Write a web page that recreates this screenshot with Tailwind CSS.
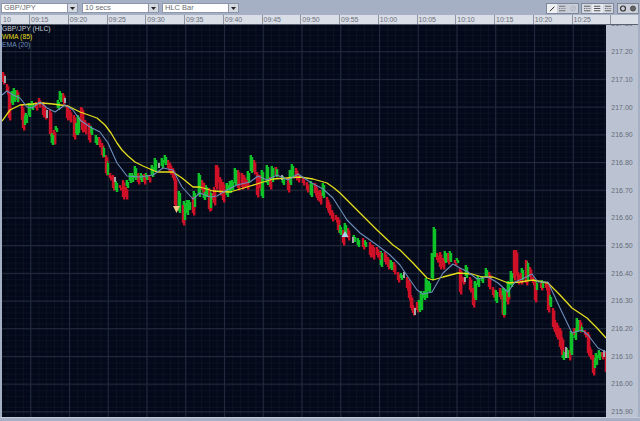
<!DOCTYPE html>
<html>
<head>
<meta charset="utf-8">
<script src="https://cdn.jsdelivr.net/npm/@tailwindcss/browser@4"></script>
</head>
<body class="m-0 overflow-hidden bg-[#a6b0c4]">
<div class="flex flex-col w-[640px] h-[421px] bg-[#a6b0c4] overflow-hidden font-['Liberation_Sans',Arial,sans-serif] text-[7px] leading-none">

  <!-- toolbar -->
  <div class="flex items-center h-[15px] pt-[1px] pl-[1px] pr-[1px] shrink-0">
    <div class="flex h-[10px] w-[77px] mr-[4px]">
      <div class="flex-1 bg-white border border-[#8d96a8] text-[#6a6d75] text-[7.5px] flex items-center pl-[2px]">GBP/JPY</div>
      <div class="w-[10px] bg-[#d5d9e2] border border-[#8d96a8] border-l-0 flex items-center justify-center"><svg width="5" height="3" viewBox="0 0 5 3"><path d="M0 0H5L2.5 3Z" fill="#222"/></svg></div>
    </div>
    <div class="flex h-[10px] w-[77px] mr-[3px]">
      <div class="flex-1 bg-white border border-[#8d96a8] text-[#6a6d75] text-[7.5px] flex items-center pl-[2px]">10 secs</div>
      <div class="w-[10px] bg-[#d5d9e2] border border-[#8d96a8] border-l-0 flex items-center justify-center"><svg width="5" height="3" viewBox="0 0 5 3"><path d="M0 0H5L2.5 3Z" fill="#222"/></svg></div>
    </div>
    <div class="flex h-[10px] w-[77px]">
      <div class="flex-1 bg-white border border-[#8d96a8] text-[#6a6d75] text-[7.5px] flex items-center pl-[2px]">HLC Bar</div>
      <div class="w-[10px] bg-[#d5d9e2] border border-[#8d96a8] border-l-0 flex items-center justify-center"><svg width="5" height="3" viewBox="0 0 5 3"><path d="M0 0H5L2.5 3Z" fill="#222"/></svg></div>
    </div>
    <div class="flex-1"></div>
    <div class="flex h-[11px] w-[33px] mr-[2px] border border-[#7f889b] bg-[#c9ced9]">
      <svg class="w-[11px] h-full bg-[#eef0f4]" viewBox="0 0 11 10"><path d="M3 8L8 3" stroke="#111" stroke-width="1"/></svg>
      <svg class="w-[11px] h-full" viewBox="0 0 11 10"><path d="M2 2.5H9M2 5H3M4 5H5M6 5H7M8 5H9M2 7.5H9" stroke="#666" stroke-width="1"/></svg>
      <svg class="w-[11px] h-full" viewBox="0 0 11 10"><circle cx="5.5" cy="5" r="2.6" fill="none" stroke="#aab0bc" stroke-width="1"/><path d="M3.5 7L7.5 3" stroke="#aab0bc"/></svg>
    </div>
    <div class="flex h-[11px] w-[33px] mr-[3px] border border-[#7f889b] bg-[#d3d7e0]">
      <svg class="w-[11px] h-full" viewBox="0 0 11 10"><path d="M2 2.5H9M2 5H3M4 5H5M6 5H7M8 5H9M2 7.5H9" stroke="#555" stroke-width="1"/></svg>
      <svg class="w-[11px] h-full bg-[#e6e9ef]" viewBox="0 0 11 10"><path d="M2 2.5H9M2 5H9M2 7.5H9" stroke="#444" stroke-width="1"/></svg>
      <svg class="w-[11px] h-full" viewBox="0 0 11 10"><path d="M2 2.5H9M2 5H3M4 5H5M6 5H7M8 5H9M2 7.5H9" stroke="#555" stroke-width="1"/></svg>
    </div>
    <div class="flex h-[11px] w-[22px] border border-[#7f889b] bg-[#c9ced9]">
      <svg class="w-[10px] h-full" viewBox="0 0 10 10"><circle cx="5" cy="5" r="2.8" fill="none" stroke="#333" stroke-width="1.3"/></svg>
      <svg class="w-[10px] h-full" viewBox="0 0 10 10"><circle cx="5" cy="5" r="2.8" fill="#666" stroke="#444" stroke-width="1"/></svg>
    </div>
  </div>

  <!-- time axis -->
  <div class="flex h-[10px] shrink-0 ml-[1px] mr-[2px] bg-[#dadee7] text-[#6a6f7a] border-b border-[#59606f]">
    <div class="w-[29px] pl-[2px] flex items-center border-r border-[#8e95a5]">10</div>
    <div class="w-[38.75px] pl-[1px] flex items-center border-r border-[#8e95a5]">09:15</div>
    <div class="w-[38.75px] pl-[1px] flex items-center border-r border-[#8e95a5]">09:20</div>
    <div class="w-[38.75px] pl-[1px] flex items-center border-r border-[#8e95a5]">09:25</div>
    <div class="w-[38.75px] pl-[1px] flex items-center border-r border-[#8e95a5]">09:30</div>
    <div class="w-[38.75px] pl-[1px] flex items-center border-r border-[#8e95a5]">09:35</div>
    <div class="w-[38.75px] pl-[1px] flex items-center border-r border-[#8e95a5]">09:40</div>
    <div class="w-[38.75px] pl-[1px] flex items-center border-r border-[#8e95a5]">09:45</div>
    <div class="w-[38.75px] pl-[1px] flex items-center border-r border-[#8e95a5]">09:50</div>
    <div class="w-[38.75px] pl-[1px] flex items-center border-r border-[#8e95a5]">09:55</div>
    <div class="w-[38.75px] pl-[1px] flex items-center border-r border-[#8e95a5]">10:00</div>
    <div class="w-[38.75px] pl-[1px] flex items-center border-r border-[#8e95a5]">10:05</div>
    <div class="w-[38.75px] pl-[1px] flex items-center border-r border-[#8e95a5]">10:10</div>
    <div class="w-[38.75px] pl-[1px] flex items-center border-r border-[#8e95a5]">10:15</div>
    <div class="w-[38.75px] pl-[1px] flex items-center border-r border-[#8e95a5]">10:20</div>
    <div class="w-[38.75px] pl-[1px] flex items-center border-r border-[#8e95a5]">10:25</div>
    <div class="flex-1"></div>
  </div>

  <!-- main -->
  <div class="flex h-[392px] shrink-0 pl-[2px] pr-[2px]">
    <div class="relative w-[604px] h-full bg-[#030919]">
      <svg class="block w-[604px] h-[392px]" viewBox="2 25 604 392">
        <defs>
          <pattern id="minor" x="30.7" y="51.7" width="7.75" height="5.55" patternUnits="userSpaceOnUse">
            <path d="M0 0V5.55M0 0H7.75" stroke="#101929" stroke-width="1" fill="none"/>
          </pattern>
          <path id="red" fill="none" stroke="#cf1128" stroke-width="2.4" d="M3 72V82M7 84V92M9 92V118M17 90V100M22 105V120M23 110V128M36 102V108M39 98V105M43 102V115M45 107V117M50 110V134M54 130V142M63 93V102M67 105V118M70 110V120M74 115V137M81 107V122M82 108V130M85 120V132M89 123V140M99 137V145M102 143V155M106 155V173M110 173V178M113 175V188M120 185V188M123 180V197M126 187V197M138 173V182M144 174V182M149 175V180M168 160V168M170 163V172M173 168V178M175 177V205M183 205V223M193 197V213M202 180V190M210 195V208M213 193V200M204 183V195M209 188V209M214 187V203M216 165V187M217 165V180M220 177V193M223 182V200M238 170V188M242 173V187M244 175V185M247 180V187M254 160V172M257 172V195M260 175V188M270 177V187M276 167V175M288 178V190M296 168V178M298 173V180M303 177V183M307 182V190M315 183V193M317 188V198M320 190V202M327 197V208M329 202V213M332 210V219M336 215V220M338 217V230M343 230V243M348 228V238M363 238V247M370 242V255M373 245V257M377 247V255M380 252V260M385 252V262M388 257V267M394 262V272M398 272V280M407 277V288M409 280V298M411 295V308M413 305V313M417 302V310M437 253V260M440 252V267M443 258V267M448 253V262M455 260V263M460 268V292M463 277V282M470 277V290M473 288V305M489 272V287M493 287V295M500 288V297M503 295V315M507 292V302M508 292V297M514 250V278M516 250V273M518 272V282M521 273V282M526 260V283M530 267V277M533 277V283M535 282V300M541 283V288M546 282V288M548 283V310M553 308V327M555 320V332M557 323V337M560 328V347M562 337V355M569 350V358M574 328V335M580 320V330M585 330V335M588 332V353M590 347V357M593 355V373M602 352V357M606 352V372"/>
          <path id="green" fill="none" stroke="#0fc22a" stroke-width="2.4" d="M13 93V105M15 90V102M18 95V102M25 117V125M27 115V123M30 105V117M33 103V110M53 135V145M57 128V132M59 102V110M61 93V102M77 125V135M79 117V133M78 125V135M92 128V135M97 137V145M104 148V157M108 163V175M117 183V192M128 182V188M131 175V183M133 175V182M136 168V180M142 175V182M147 175V180M153 167V177M156 160V172M163 160V168M166 157V165M180 193V213M185 203V220M188 202V215M190 202V210M195 193V207M200 175V197M205 192V200M207 187V197M211 193V208M228 185V197M231 183V193M233 182V190M236 170V185M249 173V183M252 157V173M263 172V198M268 167V185M273 168V182M277 169V177M284 178V185M291 172V185M293 166V177M312 183V197M324 185V198M341 227V235M346 225V237M355 237V242M359 240V247M366 242V247M382 253V267M392 262V270M402 275V280M420 302V312M422 293V310M425 293V300M427 280V298M430 283V293M433 255V280M435 229V257M446 253V263M451 253V262M458 260V263M467 267V278M476 283V300M479 278V287M483 278V283M487 270V278M497 292V303M505 290V315M504 290V315M509 283V297M512 273V287M523 270V280M528 263V280M537 283V290M543 282V288M551 297V307M564 352V360M568 350V358M572 333V355M576 330V340M578 320V332M582 327V332M595 360V368M597 355V365M600 352V360"/>
        </defs>
        <rect x="2" y="25" width="604" height="392" fill="url(#minor)"/>
        <path stroke="#232c3e" stroke-width="1" d="M30.7 25V417M69.45 25V417M108.2 25V417M146.95 25V417M185.7 25V417M224.45 25V417M263.2 25V417M301.95 25V417M340.7 25V417M379.45 25V417M418.2 25V417M456.95 25V417M495.7 25V417M534.45 25V417M573.2 25V417M2 51.7H606M2 79.4H606M2 107.1H606M2 134.8H606M2 162.5H606M2 190.2H606M2 217.9H606M2 245.6H606M2 273.3H606M2 301H606M2 328.7H606M2 356.4H606M2 384.1H606M2 411.8H606"/>

        <use href="#red" transform="translate(1.2 2.5)"/>
        <use href="#green" transform="translate(-1.2 -2)"/>
        <use href="#red"/>
        <use href="#green"/>
        <path fill="none" stroke="#a5a5a8" stroke-width="2" d="M5 76V83M47 110V118M65 98V103M115 177V182M159 163V168M282 175V180M353 237V243M404 272V278M415 308V315M465 277V282M566 347V358M604 350V357"/>

        <polyline fill="none" stroke="#e6de1c" stroke-width="1.3" stroke-linejoin="round" points="2,121 10,110 20,105 33,104 42,103 53,104 68,106 80,112 97,118 105,125 111,133 117,143 122,150 128,156 135,162 143,166 157,172 173,172 182,178 193,187 200,187 213,191 230,192 247,187 260,183 273,179 287,178 300,177 313,179 327,183 334,188 340,193 357,210 377,230 393,245 400,250 413,263 427,278 433,280 443,277 458,273 472,274 482,277 493,277 508,283 520,282 533,280 548,283 560,295 572,308 587,318 597,328 606,338"/>
        <polyline fill="none" stroke="#6e8dbb" stroke-width="1.1" stroke-linejoin="round" points="2,95 7,91 13,95 20,98 27,107 32,108 40,102 47,108 55,112 65,105 73,110 80,120 90,127 100,132 108,143 117,163 127,176 140,177 153,175 163,168 173,170 182,187 193,199 200,193 210,197 217,196 225,191 237,185 250,182 258,176 267,180 277,175 288,180 298,174 310,182 323,189 333,198 347,220 360,233 377,245 390,255 400,265 408,277 417,290 423,294 432,292 443,273 453,264 460,268 468,272 477,279 488,277 498,283 508,292 515,282 522,279 532,274 538,282 548,282 560,308 572,333 582,330 588,335 598,348 606,352"/>

        <path d="M173 206H180L176.5 213Z" fill="#f3c486"/>
        <path d="M345 231L348.5 237H341.5Z" fill="#a9d2ee"/>
      </svg>
      <div class="absolute left-0 top-0 flex flex-col gap-[1.2px] text-[6.8px] leading-[7px]">
        <span class="text-[#c8ccd4]">GBP/JPY (HLC)</span>
        <span class="text-[#e6de1c]">WMA (85)</span>
        <span class="text-[#6e8dbb]">EMA (20)</span>
      </div>
    </div>
    <div class="w-[32px] h-full overflow-hidden bg-[#bbc3d3] text-[#666b77] text-center flex flex-col">
      <div class="h-[27.7px] -mt-[14.9px] shrink-0 flex items-center justify-center">217.30</div>
      <div class="h-[27.7px] shrink-0 flex items-center justify-center">217.20</div>
      <div class="h-[27.7px] shrink-0 flex items-center justify-center">217.10</div>
      <div class="h-[27.7px] shrink-0 flex items-center justify-center">217.00</div>
      <div class="h-[27.7px] shrink-0 flex items-center justify-center">216.90</div>
      <div class="h-[27.7px] shrink-0 flex items-center justify-center">216.80</div>
      <div class="h-[27.7px] shrink-0 flex items-center justify-center">216.70</div>
      <div class="h-[27.7px] shrink-0 flex items-center justify-center">216.60</div>
      <div class="h-[27.7px] shrink-0 flex items-center justify-center">216.50</div>
      <div class="h-[27.7px] shrink-0 flex items-center justify-center">216.40</div>
      <div class="h-[27.7px] shrink-0 flex items-center justify-center">216.30</div>
      <div class="h-[27.7px] shrink-0 flex items-center justify-center">216.20</div>
      <div class="h-[27.7px] shrink-0 flex items-center justify-center">216.10</div>
      <div class="h-[27.7px] shrink-0 flex items-center justify-center">216.00</div>
      <div class="h-[27.7px] shrink-0 flex items-center justify-center">215.90</div>
    </div>
  </div>

  <!-- bottom strip -->
  <div class="h-[4px] shrink-0 bg-[#a6b0c4] border-t border-[#c3cad8]"></div>
</div>
</body>
</html>
